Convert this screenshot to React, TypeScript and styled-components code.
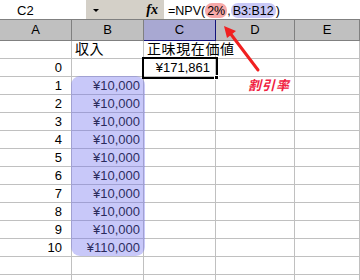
import React from "react"
import styled, {createGlobalStyle} from "styled-components"

const GlobalStyle = createGlobalStyle`
  html, body {
    margin: 0;
    padding: 0;
    background: #fff;
  }
  body {
    font-family: "Liberation Sans", "Noto Sans CJK JP", sans-serif;
    color: #000;
  }
`

const COLS = "72px 72px 72px 79px 1fr"

type RowData = {a: string, b: string, c: string, selected?: boolean, jp?: boolean}

const rows: RowData[] = [
  {a: "", b: "収入", c: "正味現在価値", jp: true},
  {a: "0", b: "", c: "¥171,861", selected: true},
  ...Array.from({length: 9}, (_, i) => ({a: String(i + 1), b: "¥10,000", c: ""})),
  {a: "10", b: "¥110,000", c: ""},
  {a: "", b: "", c: ""},
  {a: "", b: "", c: ""},
]

const App = () => {
  return (
    <>
      <GlobalStyle/>
      <Window>
        <FormulaBar>
          <NameBox>C2</NameBox>
          <DropButton/>
          <FxLabel>fx</FxLabel>
          <Formula>
            =NPV(<Ref $tone="pink">2%</Ref>,<Ref $tone="blue">B3:B12</Ref>)
          </Formula>
        </FormulaBar>

        <HeaderRow>
          {["A", "B", "C", "D", "E"].map(l =>
            <HeaderCell key={l} $active={l === "C"}>{l}</HeaderCell>
          )}
        </HeaderRow>

        {rows.map((r, i) =>
          <Row key={i}>
            <Cell $align="right" $pad="0 9px 0 0">{r.a}</Cell>
            <Cell $align={r.jp ? "left" : "right"} $pad={r.jp ? "0 0 0 3px" : "0 3px 0 0"} $jp={r.jp}>{r.b}</Cell>
            <Cell $align={r.jp ? "left" : "right"} $pad={r.jp ? "0 0 0 3px" : "0 5px 0 0"} $jp={r.jp} $selected={r.selected}>{r.c}</Cell>
            <Cell/>
            <Cell/>
          </Row>
        )}

        <RangeHighlight/>
        <Arrow width="50" height="60" viewBox="0 0 50 60">
          <line x1="40" y1="50" x2="12" y2="13" stroke="#f02020" strokeWidth="3" strokeLinecap="round"/>
          <polygon points="6,6 18,11 9,18" fill="#f02020"/>
        </Arrow>
        <Note>割引率</Note>
      </Window>
    </>
  )
}

const Window = styled.div`
  position: relative;
  width: 360px;
  height: 280px;
  overflow: hidden;
  background: #fff;
`

const FormulaBar = styled.div`
  display: flex;
  height: 20px;
  box-sizing: border-box;
  border-bottom: 1px solid #808080;
  background: #d4d0c8;
`
const NameBox = styled.div`
  width: 86px;
  box-sizing: border-box;
  padding: 3px 0 0 17px;
  background: #fff;
  font-size: 13px;
  line-height: 15px;
`
const DropButton = styled.div`
  display: flex;
  align-items: center;
  justify-content: center;
  width: 20px;
  &::after{
    content: "";
    border-left: 3px solid transparent;
    border-right: 3px solid transparent;
    border-top: 3px solid #000;
    margin-top: 2px;
  }
`
const FxLabel = styled.div`
  width: 58px;
  box-sizing: border-box;
  padding: 2px 6px 0 0;
  text-align: right;
  font-family: "Liberation Serif", serif;
  font-style: italic;
  font-weight: bold;
  font-size: 14px;
  line-height: 15px;
`
const Formula = styled.div`
  flex: 1;
  padding: 4px 0 0 4px;
  background: #fff;
  font-size: 12.5px;
  line-height: 14px;
  white-space: nowrap;
`
const Ref = styled.span<{$tone: "pink" | "blue"}>`
  display: inline-block;
  margin: -3px 0 -1px;
  padding: 1px 2px 0;
  line-height: 14px;
  border-radius: 7px;
  background: ${p => p.$tone === "pink" ? "#f6a9a9" : "#c8c8f6"};
`

const HeaderRow = styled.div`
  display: grid;
  grid-template-columns: ${COLS};
  height: 21px;
`
const HeaderCell = styled.div<{$active?: boolean}>`
  box-sizing: border-box;
  border-right: 1px solid ${p => p.$active ? "#14147a" : "#808080"};
  border-bottom: 1px solid ${p => p.$active ? "#14147a" : "#808080"};
  background: ${p => p.$active ? "#a8a8d2" : "#c0c0c0"};
  text-align: center;
  font-size: 13px;
  line-height: 20px;
`

const Row = styled.div`
  display: grid;
  grid-template-columns: ${COLS};
  height: 18px;
`
const Cell = styled.div<{$align?: string, $pad?: string, $jp?: boolean, $selected?: boolean}>`
  position: relative;
  box-sizing: border-box;
  padding: ${p => p.$pad || "0"};
  border-right: 1px solid #c0c0c0;
  border-bottom: 1px solid #c0c0c0;
  text-align: ${p => p.$align || "left"};
  font-size: ${p => p.$jp ? "14px" : "13px"};
  letter-spacing: ${p => p.$jp ? "0.6px" : "0"};
  line-height: 17px;
  white-space: nowrap;
  ${p => p.$selected && `
    z-index: 2;
    outline: 2px solid #000;
    &::after{
      content: "";
      position: absolute;
      right: -4px;
      bottom: -4px;
      width: 5px;
      height: 5px;
      background: #000;
      border: 1px solid #fff;
      box-sizing: border-box;
    }
  `}
`

const RangeHighlight = styled.div`
  position: absolute;
  left: 71px;
  top: 76px;
  width: 74px;
  height: 180px;
  border-radius: 9px;
  background: rgba(110, 110, 240, 0.38);
  pointer-events: none;
`
const Arrow = styled.svg`
  position: absolute;
  left: 218px;
  top: 20px;
`
const Note = styled.div`
  position: absolute;
  left: 248px;
  top: 78px;
  color: #f02040;
  font-size: 13px;
  font-weight: bold;
  font-style: italic;
  letter-spacing: 1px;
  line-height: 16px;
`

export default App
